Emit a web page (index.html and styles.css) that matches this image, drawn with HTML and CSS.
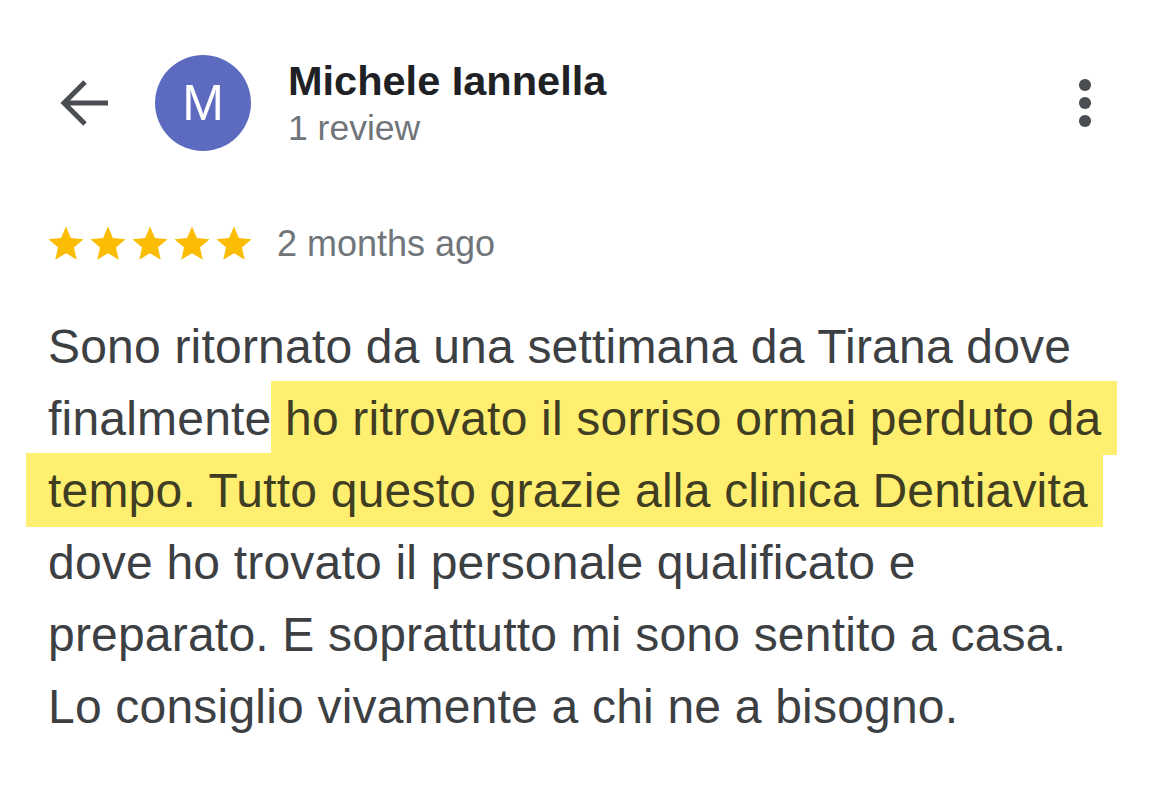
FILE: index.html
```html
<!DOCTYPE html>
<html lang="it">
<head>
<meta charset="utf-8">
<title>Michele Iannella - review</title>
<link rel="stylesheet" href="styles.css">
</head>
<body>
<main class="page">
  <header class="top">
    <button class="back" aria-label="Back">
      <svg width="48" height="48" viewBox="0 0 48 48"><path d="M48 24H4M25 3L4 24l21 21" fill="none" stroke="#4a4e52" stroke-width="5" stroke-linecap="butt" stroke-linejoin="miter"/></svg>
    </button>
    <div class="avatar">M</div>
    <div class="who">
      <div class="name">Michele Iannella</div>
      <div class="count">1 review</div>
    </div>
    <button class="more" aria-label="More"><span></span><span></span><span></span></button>
  </header>
  <section class="review">
    <div class="meta">
      <div class="stars">
        <svg width="42" height="42" viewBox="0 0 24 24"><path d="M12 17.27L18.18 21l-1.64-7.03L22 9.24l-7.19-.61L12 2 9.19 8.63 2 9.24l5.46 4.73L5.82 21z"/></svg>
        <svg width="42" height="42" viewBox="0 0 24 24"><path d="M12 17.27L18.18 21l-1.64-7.03L22 9.24l-7.19-.61L12 2 9.19 8.63 2 9.24l5.46 4.73L5.82 21z"/></svg>
        <svg width="42" height="42" viewBox="0 0 24 24"><path d="M12 17.27L18.18 21l-1.64-7.03L22 9.24l-7.19-.61L12 2 9.19 8.63 2 9.24l5.46 4.73L5.82 21z"/></svg>
        <svg width="42" height="42" viewBox="0 0 24 24"><path d="M12 17.27L18.18 21l-1.64-7.03L22 9.24l-7.19-.61L12 2 9.19 8.63 2 9.24l5.46 4.73L5.82 21z"/></svg>
        <svg width="42" height="42" viewBox="0 0 24 24"><path d="M12 17.27L18.18 21l-1.64-7.03L22 9.24l-7.19-.61L12 2 9.19 8.63 2 9.24l5.46 4.73L5.82 21z"/></svg>
      </div>
      <span class="ago">2 months ago</span>
    </div>
    <p class="text">Sono ritornato da una settimana da Tirana dove finalmente<span class="hl hl-a"> ho ritrovato il sorriso ormai perduto da</span> <span class="hl hl-b">tempo. Tutto questo grazie alla clinica Dentiavita</span> dove ho trovato il personale qualificato e preparato. E soprattutto mi sono sentito a casa. Lo consiglio vivamente a chi ne a bisogno.</p>
  </section>
</main>
</body>
</html>
```
FILE: styles.css
```css
* { box-sizing: border-box; }
html, body { margin: 0; padding: 0; background: #ffffff; }
body {
  font-family: "Liberation Sans", Arial, Helvetica, sans-serif;
  color: #3c4043;
}
.page {
  width: 1170px;
  height: 797px;
  overflow: hidden;
}
.top {
  display: flex;
  align-items: center;
  padding: 55px 0 0 60px;
}
.back {
  width: 48px;
  height: 48px;
  padding: 0;
  border: 0;
  background: none;
  display: block;
  flex: none;
}
.back svg { display: block; }
.avatar {
  flex: none;
  width: 96px;
  height: 96px;
  margin-left: 47px;
  border-radius: 50%;
  background: #5c6bc0;
  color: #ffffff;
  font-size: 50px;
  line-height: 96px;
  text-align: center;
}
.who {
  margin-left: 37px;
  flex: 1;
}
.name {
  font-size: 41.5px;
  line-height: 50px;
  font-weight: bold;
  color: #202124;
}
.count {
  font-size: 35.5px;
  line-height: 44px;
  color: #70757a;
}
.more {
  flex: none;
  width: 40px;
  height: 60px;
  margin-right: 65px;
  padding: 0;
  border: 0;
  background: none;
  display: flex;
  flex-direction: column;
  align-items: center;
  justify-content: center;
  gap: 6.5px;
}
.more span {
  width: 11.5px;
  height: 11.5px;
  border-radius: 50%;
  background: #4a4e52;
}
.review {
  padding-left: 48px;
}
.meta {
  display: flex;
  align-items: center;
  margin-top: 71.5px;
  height: 42px;
}
.stars {
  display: flex;
  margin-left: -3.5px;
}
.stars svg { display: block; fill: #fbbc04; }
.ago {
  margin-left: 22.5px;
  font-size: 36px;
  line-height: 42px;
  color: #70757a;
}
.text {
  width: 1080px;
  margin: 46px 0 0;
  font-size: 48px;
  line-height: 72px;
  letter-spacing: 0.2px;
  color: #3c4043;
}
.hl {
  background: #ffef70;
  color: #3f3d22;
  padding-top: 10.7px;
  padding-bottom: 10.7px;
}
.hl-a {
  padding-right: 16px;
}
.hl-b {
  margin-left: -22px;
  padding-left: 22px;
  padding-right: 15px;
}
```
